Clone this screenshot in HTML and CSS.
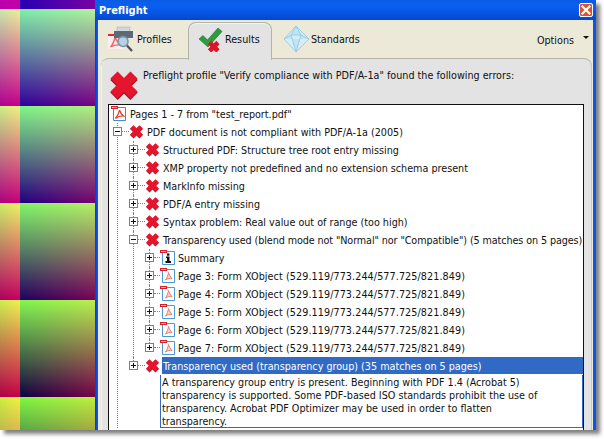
FILE: index.html
```html
<!DOCTYPE html>
<html lang="en">
<head>
<meta charset="utf-8">
<title>Preflight</title>
<link rel="stylesheet" href="styles.css">
</head>
<body>
<svg class="defs" width="0" height="0" aria-hidden="true">
  <defs>
    <symbol id="x" viewBox="0 0 16 16">
      <path d="M3 3 L13 13 M13 3 L3 13" fill="none" stroke="#a30f24" stroke-width="5.200" transform="translate(0 .6)"/>
      <path d="M3 3 L13 13 M13 3 L3 13" fill="none" stroke="#e5152e" stroke-width="5"/>
    </symbol>
    <symbol id="pdf" viewBox="0 0 16 15">
      <path d="M2.500 1.500 H14.500 V14.500 H2.500 Z" fill="#fff" stroke="#3d8fd0"/>
      <path d="M8.500 4 C8 7.500 6.500 10 4.500 12.500 C7 10.500 10 9.800 12.500 10 C10.500 8.500 9.200 6.500 8.500 4 Z" fill="none" stroke="#e2402c" stroke-width="1.300"/>
      <rect x="0" y="0" width="7" height="3" fill="#d81f2c"/>
      <rect x="1" y="1" width="5" height="1" fill="#f6b5b5"/>
    </symbol>
    <symbol id="pdf-faint" viewBox="0 0 16 15">
      <path d="M2.500 1.500 H14.500 V14.500 H2.500 Z" fill="#fff" stroke="#4a98d6"/>
      <path d="M8.500 4.500 C8 7.500 7 10 5.500 12 C7.500 10.500 10 10 12 10.500 C10.500 9 9.200 7 8.500 4.500 Z" fill="#fbd5d0" stroke="#e77a6e" stroke-width="1"/>
      <rect x="0" y="0" width="7" height="3" fill="#d81f2c"/>
      <rect x="1" y="1" width="5" height="1" fill="#f6b5b5"/>
    </symbol>
    <symbol id="info" viewBox="0 0 16 15">
      <path d="M2.500 1.500 H14.500 V14.500 H2.500 Z" fill="#fff" stroke="#4a98d6"/>
      <rect x="7" y="3.500" width="2.400" height="2.200" fill="#111"/>
      <path d="M6 6.500 H9.500 V11 H11 V13 H5.500 V11 H7 V8 H6 Z" fill="#111"/>
      <rect x="0" y="0" width="7" height="3" fill="#d81f2c"/>
      <rect x="1" y="1" width="5" height="1" fill="#f6b5b5"/>
    </symbol>
  </defs>
</svg>
<div class="shot">
  <div class="desktop">
    <div class="tile c1 r0"></div><div class="tile c2 r0"></div>
    <div class="tile c1 r1"></div><div class="tile c2 r1"></div>
    <div class="tile c1 r2"></div><div class="tile c2 r2"></div>
    <div class="tile c1 r3"></div><div class="tile c2 r3"></div>
    <div class="tile c1 r4"></div><div class="tile c2 r4"></div>
    <div class="tile c1 r5"></div><div class="tile c2 r5"></div>
  </div>
  <div class="window">
    <div class="titlebar">
      <span class="title">Preflight</span>
      <span class="close"><svg width="14" height="14" viewBox="0 0 14 14"><path d="M3.500 3.500 L10.500 10.500 M10.500 3.500 L3.500 10.500" stroke="#fff" stroke-width="2.200" stroke-linecap="square"/></svg></span>
    </div>
    <div class="client">
      <div class="tabs">
        <div class="tab tab-profiles">
          <svg class="tab-icon" width="26" height="26" viewBox="0 0 26 26">
            <rect x="0" y="8" width="15" height="15" fill="#fbeeee"/>
            <rect x="0" y="8" width="8" height="2" fill="#e02a2a"/>
            <path d="M7 11 C6 16 4.500 19 2.500 21 C6 19 9 18.500 13 19 C10 17 8 14 7 11 Z" fill="none" stroke="#e66" stroke-width="1.400"/>
            <rect x="9" y="1" width="13" height="5" fill="#cfd6dc" stroke="#aab" stroke-width=".5"/>
            <rect x="6" y="5" width="19" height="7" fill="#5d6a76"/>
            <rect x="10" y="12" width="12" height="4" fill="#dfe4e8"/>
            <circle cx="15" cy="15.500" r="5" fill="#a9cde8" fill-opacity=".8" stroke="#7d93a5" stroke-width="1.500"/>
            <path d="M19 19.500 L24 25" stroke="#4d4d4d" stroke-width="2.200"/>
          </svg>
          <span>Profiles</span>
        </div>
        <div class="tab tab-results">
          <svg class="tab-icon" width="25" height="25" viewBox="0 0 25 25">
            <path d="M1 12 L5 8.500 L9.500 13 L20 1 L24 4.500 L10 20 Z" fill="#2e9c3e" stroke="#1c6e2e" stroke-width=".6"/>
            <path d="M11.500 15.500 L20 24 M20 15.500 L11.500 24" fill="none" stroke="#dd1428" stroke-width="4.600"/>
          </svg>
          <span>Results</span>
        </div>
        <div class="tab tab-standards">
          <svg class="tab-icon" width="27" height="28" viewBox="0 0 27 28">
            <path d="M13 1 L26 14 L13 27 L1 14 Z" fill="#d4eef8" stroke="#9fcfe4"/>
            <path d="M13 1 L8 10 L13 27 L18 10 Z M1 14 L8 10 L18 10 L26 14" fill="#bfe4f3" stroke="#8fc6de" stroke-width=".8"/>
          </svg>
          <span>Standards</span>
        </div>
        <div class="options">
          <span>Options</span>
          <span class="arrow"></span>
        </div>
      </div>
      <div class="panel">
        <div class="message">
          <svg class="big-x" width="32" height="32"><use href="#x"/></svg>
          <span>Preflight profile "Verify compliance with PDF/A-1a" found the following errors:</span>
        </div>
        <div class="tree">
          <div class="row root">
            <svg class="ic-doc" width="16" height="15"><use href="#pdf"/></svg>
            <span class="label">Pages 1 - 7 from "test_report.pdf"</span>
          </div>
          <ul class="branch">
            <li>
              <div class="row"><i class="box minus"></i><i class="dash"></i><svg class="ic" width="15" height="15"><use href="#x"/></svg><span class="label">PDF document is not compliant with PDF/A-1a (2005)</span></div>
              <ul class="branch">
                <li><div class="row"><i class="box"></i><i class="dash"></i><svg class="ic" width="15" height="15"><use href="#x"/></svg><span class="label">Structured PDF: Structure tree root entry missing</span></div></li>
                <li><div class="row"><i class="box"></i><i class="dash"></i><svg class="ic" width="15" height="15"><use href="#x"/></svg><span class="label">XMP property not predefined and no extension schema present</span></div></li>
                <li><div class="row"><i class="box"></i><i class="dash"></i><svg class="ic" width="15" height="15"><use href="#x"/></svg><span class="label">MarkInfo missing</span></div></li>
                <li><div class="row"><i class="box"></i><i class="dash"></i><svg class="ic" width="15" height="15"><use href="#x"/></svg><span class="label">PDF/A entry missing</span></div></li>
                <li><div class="row"><i class="box"></i><i class="dash"></i><svg class="ic" width="15" height="15"><use href="#x"/></svg><span class="label">Syntax problem: Real value out of range (too high)</span></div></li>
                <li>
                  <div class="row"><i class="box minus"></i><i class="dash"></i><svg class="ic" width="15" height="15"><use href="#x"/></svg><span class="label tight">Transparency used (blend mode not "Normal" nor "Compatible") (5 matches on 5 pages)</span></div>
                  <ul class="branch">
                    <li><div class="row"><i class="box"></i><i class="dash short"></i><svg class="ic-doc" width="16" height="15"><use href="#info"/></svg><span class="label">Summary</span></div></li>
                    <li><div class="row"><i class="box"></i><i class="dash short"></i><svg class="ic-doc" width="16" height="15"><use href="#pdf-faint"/></svg><span class="label wide">Page 3: Form XObject (529.119/773.244/577.725/821.849)</span></div></li>
                    <li><div class="row"><i class="box"></i><i class="dash short"></i><svg class="ic-doc" width="16" height="15"><use href="#pdf-faint"/></svg><span class="label wide">Page 4: Form XObject (529.119/773.244/577.725/821.849)</span></div></li>
                    <li><div class="row"><i class="box"></i><i class="dash short"></i><svg class="ic-doc" width="16" height="15"><use href="#pdf-faint"/></svg><span class="label wide">Page 5: Form XObject (529.119/773.244/577.725/821.849)</span></div></li>
                    <li><div class="row"><i class="box"></i><i class="dash short"></i><svg class="ic-doc" width="16" height="15"><use href="#pdf-faint"/></svg><span class="label wide">Page 6: Form XObject (529.119/773.244/577.725/821.849)</span></div></li>
                    <li class="last"><div class="row"><i class="box"></i><i class="dash short"></i><svg class="ic-doc" width="16" height="15"><use href="#pdf-faint"/></svg><span class="label wide">Page 7: Form XObject (529.119/773.244/577.725/821.849)</span></div></li>
                  </ul>
                </li>
                <li class="last">
                  <div class="row"><i class="box"></i><i class="dash"></i><svg class="ic" width="15" height="15"><use href="#x"/></svg><span class="label selected">Transparency used (transparency group) (35 matches on 5 pages)</span></div>
                  <div class="detail">A transparency group entry is present. Beginning with PDF 1.4 (Acrobat 5) transparency is supported. Some PDF-based ISO standards prohibit the use of transparency. Acrobat PDF Optimizer may be used in order to flatten transparency.</div>
                </li>
              </ul>
            </li>
          </ul>
        </div>
      </div>
    </div>
  </div>
</div>
</body>
</html>
```
FILE: styles.css
```css
* { box-sizing: border-box; }
html, body { margin: 0; padding: 0; background: #fff; }
body { width: 604px; height: 439px; overflow: hidden; font-family: "DejaVu Sans Condensed", "DejaVu Sans", sans-serif; font-stretch: condensed; font-size: 10.7px; color: #111; }
.defs { display: block; height: 0; }
.shot { display: flex; width: 596px; height: 430px; box-shadow: 4px 4px 4px rgba(0,0,0,.5); }

.desktop { width: 95px; height: 430px; display: grid; grid-template-columns: 20px 75px; grid-template-rows: 9px 97px 97px 97px 97px 33px; flex: none; }
.tile { position: relative; background: linear-gradient(to bottom, var(--tl), var(--bl)); }
.tile::after { content: ""; position: absolute; inset: 0; background: linear-gradient(to bottom, var(--tr), var(--br)); -webkit-mask-image: linear-gradient(to right, transparent, #000); mask-image: linear-gradient(to right, transparent, #000); }
.c1.r0 { --tl: #b800b0; --tr: #c800a8; --bl: #b800a8; --br: #c400a8; }
.c2.r0 { --tl: #2800b4; --tr: #7800a4; --bl: #2800b0; --br: #7800a0; }
.c1.r1 { --tl: #c8e8a8; --tr: #f0f098; --bl: #b00090; --br: #c80088; }
.c2.r1 { --tl: #80f0a8; --tr: #aef59c; --bl: #2c009c; --br: #780084; }
.c1.r2 { --tl: #c8f088; --tr: #f2f080; --bl: #b00080; --br: #c80078; }
.c2.r2 { --tl: #80f888; --tr: #b0f080; --bl: #200080; --br: #780070; }
.c1.r3 { --tl: #c8f068; --tr: #f2f068; --bl: #b00060; --br: #c80060; }
.c2.r3 { --tl: #80f868; --tr: #b4f068; --bl: #200060; --br: #780058; }
.c1.r4 { --tl: #c8f050; --tr: #f2f050; --bl: #b00048; --br: #c80048; }
.c2.r4 { --tl: #80f850; --tr: #b8f050; --bl: #100040; --br: #780048; }
.c1.r5 { --tl: #c8f040; --tr: #f4f040; --bl: #c0b850; --br: #e0b850; }
.c2.r5 { --tl: #80f840; --tr: #bcf040; --bl: #58a848; --br: #a8a840; }

.window { flex: 1; display: flex; flex-direction: column; min-width: 0; background: linear-gradient(to right, #0038e0, #0a55f0 2px); }
.titlebar { height: 20px; flex: none; display: flex; align-items: center; justify-content: space-between; padding: 0 3px 0 4px; background: linear-gradient(to bottom, #0a5ce6, #0a60ee 30%, #0450dc 80%, #0646c8); }
.title { font-weight: 700; font-size: 11px; color: #fff; }
.close { width: 14px; height: 14px; display: block; border: 1px solid #fff; border-radius: 2px; background: #e0512c; }
.close svg { display: block; margin: -1px; }

.client { flex: 1; min-height: 0; margin: 0 3px; background: #ece9d8; display: flex; flex-direction: column; }
.tabs { height: 38px; flex: none; display: flex; align-items: flex-end; padding-left: 5px; position: relative; z-index: 1; }
.tab { display: flex; align-items: center; height: 36px; }
.tab-icon { flex: none; display: block; }
.tab-profiles { width: 85px; padding: 0 0 2px 5px; gap: 3px; }
.tab-results { width: 84px; height: 38px; margin-bottom: -2px; padding: 0 0 4px 9px; gap: 2px; background: #e3e3e3; border: 1px solid #b4b4a8; border-bottom: 0; border-radius: 8px 8px 0 0; box-shadow: inset 0 1px 0 #f4f4f0; }
.tab-standards { padding: 0 0 2px 11px; gap: 1px; }
.options { margin-left: auto; display: flex; align-items: center; height: 36px; padding: 0 4px 0 0; }
.arrow { width: 0; height: 0; margin: 0 0 6px 9px; border: 3px solid transparent; border-top: 3px solid #111; border-bottom: 0; }

.panel { flex: 1; min-height: 0; margin: 0 1px 0 3px; padding: 0 8px 0 7px; display: flex; flex-direction: column; background: #e3e3e3; border-top: 1px solid #b4b4a8; border-radius: 8px 8px 0 0; box-shadow: inset -1px 0 0 #c8c8c8, inset 1px 0 0 #f0f0f0; }
.message { height: 45px; flex: none; display: flex; gap: 3px; padding-top: 10px; line-height: 13px; }
.big-x { flex: none; display: block; }
.tree { flex: 1; min-height: 0; overflow: hidden; background: #fff; border: 1px solid #111; border-bottom: 0; }

.row { position: relative; display: flex; align-items: center; height: 18px; white-space: nowrap; }
.root { padding-left: 2px; gap: 1px; }
ul.branch { list-style: none; margin: 0 0 0 15px; padding: 0; }
.tree > ul.branch { margin-left: 8px; }
ul.branch li { border-left: 1px dotted #808080; }
ul.branch li.last { border-left-color: transparent; }
li.last > .row::before { content: ""; position: absolute; left: -1px; top: 0; height: 6px; border-left: 1px dotted #808080; }
.box { position: relative; flex: none; display: block; width: 9px; height: 9px; margin: -1px 0 0 -5px; background: #fff linear-gradient(#111, #111) center / 5px 1px no-repeat; border: 1px solid #808080; }
.box:not(.minus)::after { content: ""; position: absolute; left: 3px; top: 1px; width: 1px; height: 5px; background: #111; }
.dash { flex: none; display: block; width: 7px; margin-top: -1px; border-top: 1px dotted #808080; }
.dash.short { width: 6px; }
.ic { flex: none; display: block; margin: -1px 2px 0 0; }
.ic-doc { flex: none; display: block; margin: -2px 1px 0 0; }
.label { display: block; padding: 1px 0 0 1px; }
.tight { letter-spacing: -.09px; }
.wide { letter-spacing: .085px; }
.selected { flex: 1; align-self: stretch; height: 17px; padding-top: 2px; background: #316ac5; color: #fff; line-height: 16px; }
.detail { margin-left: 26px; height: 53px; margin-bottom: 4px; padding: 1px 30px 0 1px; line-height: 13px; border: 1px solid #316ac5; border-top: 0; background: #fff; }
```
